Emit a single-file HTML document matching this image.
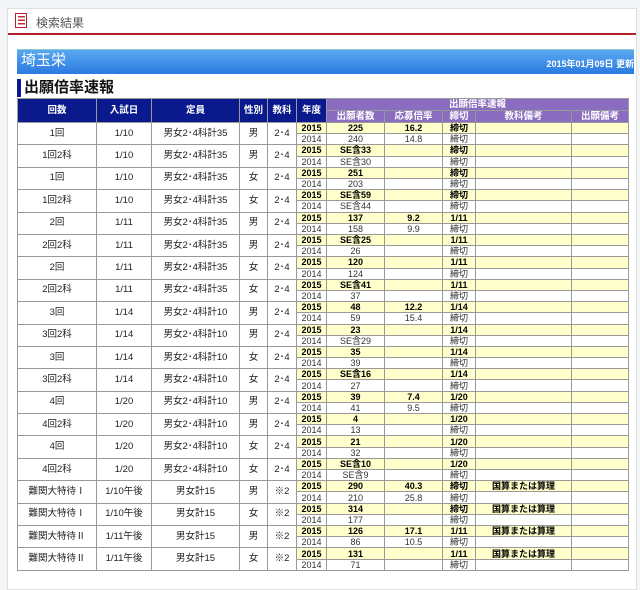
<!DOCTYPE html>
<html><head><meta charset="utf-8"><style>
body{margin:0;width:640px;height:578px;overflow:hidden;background:#f4f5f7;font-family:"Liberation Sans","Noto Sans CJK JP",sans-serif;}
.box{position:absolute;left:7px;top:8px;width:628px;height:580px;background:#fff;border:1px solid #e0e0e0;}
.hd{position:absolute;left:0;top:0;width:628px;height:24px;border-bottom:2px solid #b4222a;}
.hd .ic{position:absolute;left:7px;top:4px;width:12px;height:15px;border:1.5px solid #b4222a;box-sizing:border-box;background:repeating-linear-gradient(#fff 0 2px,#c0303a 2px 3.5px);background-clip:content-box;padding:1px 1.5px;}
.hd span{position:absolute;left:28px;top:5px;font-size:12px;color:#555;}
.bar{position:absolute;left:9px;top:40px;width:617px;height:24px;background:linear-gradient(#5aa8f0,#2a7ae0);border-top:1px solid #8cc;}
.bar b{position:absolute;left:4px;top:2px;font-size:15px;line-height:18px;color:#fff;font-weight:normal}
.bar i{position:absolute;right:0;top:7px;font-size:9px;color:#fff;font-weight:bold;font-style:normal}
.tt{position:absolute;left:9px;top:70px;height:18px;border-left:4px solid #0a1a8c;padding-left:3px;font-size:15px;font-weight:bold;line-height:18px;color:#111}
table{position:absolute;left:9px;top:89px;width:611px;border-collapse:collapse;table-layout:fixed;font-size:9px;}
td,th{border:1px solid #999;padding:0;text-align:center;overflow:hidden;white-space:nowrap;line-height:10px}
th{color:#fff;font-size:9.5px}
th.n{background:#0a1a8c;height:23px}
th.p{background:#8a6cc0;height:11px;line-height:10px}
td.l{height:21.4px;font-size:9.5px;color:#222}
tr.a td.r{background:#ffffcc;font-weight:bold;height:10.2px}
tr.b td{height:10.2px;color:#333}
</style></head><body>
<div class="box">
<div class="hd"><div class="ic"></div><span>検索結果</span></div>
<div class="bar"><b>埼玉栄</b><i>2015年01月09日 更新</i></div>
<div class="tt">出願倍率速報</div>
<table>
<colgroup><col style="width:79px"><col style="width:55px"><col style="width:88px"><col style="width:28px"><col style="width:29px"><col style="width:30px"><col style="width:58px"><col style="width:58px"><col style="width:33px"><col style="width:96px"><col style="width:57px"></colgroup>
<tr><th class="n" rowspan="2">回数</th><th class="n" rowspan="2">入試日</th><th class="n" rowspan="2">定員</th><th class="n" rowspan="2">性別</th><th class="n" rowspan="2">教科</th><th class="n" rowspan="2">年度</th><th class="p" colspan="5">出願倍率速報</th></tr>
<tr><th class="p">出願者数</th><th class="p">応募倍率</th><th class="p">締切</th><th class="p">教科備考</th><th class="p">出願備考</th></tr>

<tr class="a"><td class="l" rowspan="2">1回</td><td class="l" rowspan="2">1/10</td><td class="l" rowspan="2">男女2･4科計35</td><td class="l" rowspan="2">男</td><td class="l" rowspan="2">2･4</td><td class="r">2015</td><td class="r">225</td><td class="r">16.2</td><td class="r">締切</td><td class="r"></td><td class="r"></td></tr>
<tr class="b"><td>2014</td><td>240</td><td>14.8</td><td>締切</td><td></td><td></td></tr>
<tr class="a"><td class="l" rowspan="2">1回2科</td><td class="l" rowspan="2">1/10</td><td class="l" rowspan="2">男女2･4科計35</td><td class="l" rowspan="2">男</td><td class="l" rowspan="2">2･4</td><td class="r">2015</td><td class="r">SE含33</td><td class="r"></td><td class="r">締切</td><td class="r"></td><td class="r"></td></tr>
<tr class="b"><td>2014</td><td>SE含30</td><td></td><td>締切</td><td></td><td></td></tr>
<tr class="a"><td class="l" rowspan="2">1回</td><td class="l" rowspan="2">1/10</td><td class="l" rowspan="2">男女2･4科計35</td><td class="l" rowspan="2">女</td><td class="l" rowspan="2">2･4</td><td class="r">2015</td><td class="r">251</td><td class="r"></td><td class="r">締切</td><td class="r"></td><td class="r"></td></tr>
<tr class="b"><td>2014</td><td>203</td><td></td><td>締切</td><td></td><td></td></tr>
<tr class="a"><td class="l" rowspan="2">1回2科</td><td class="l" rowspan="2">1/10</td><td class="l" rowspan="2">男女2･4科計35</td><td class="l" rowspan="2">女</td><td class="l" rowspan="2">2･4</td><td class="r">2015</td><td class="r">SE含59</td><td class="r"></td><td class="r">締切</td><td class="r"></td><td class="r"></td></tr>
<tr class="b"><td>2014</td><td>SE含44</td><td></td><td>締切</td><td></td><td></td></tr>
<tr class="a"><td class="l" rowspan="2">2回</td><td class="l" rowspan="2">1/11</td><td class="l" rowspan="2">男女2･4科計35</td><td class="l" rowspan="2">男</td><td class="l" rowspan="2">2･4</td><td class="r">2015</td><td class="r">137</td><td class="r">9.2</td><td class="r">1/11</td><td class="r"></td><td class="r"></td></tr>
<tr class="b"><td>2014</td><td>158</td><td>9.9</td><td>締切</td><td></td><td></td></tr>
<tr class="a"><td class="l" rowspan="2">2回2科</td><td class="l" rowspan="2">1/11</td><td class="l" rowspan="2">男女2･4科計35</td><td class="l" rowspan="2">男</td><td class="l" rowspan="2">2･4</td><td class="r">2015</td><td class="r">SE含25</td><td class="r"></td><td class="r">1/11</td><td class="r"></td><td class="r"></td></tr>
<tr class="b"><td>2014</td><td>26</td><td></td><td>締切</td><td></td><td></td></tr>
<tr class="a"><td class="l" rowspan="2">2回</td><td class="l" rowspan="2">1/11</td><td class="l" rowspan="2">男女2･4科計35</td><td class="l" rowspan="2">女</td><td class="l" rowspan="2">2･4</td><td class="r">2015</td><td class="r">120</td><td class="r"></td><td class="r">1/11</td><td class="r"></td><td class="r"></td></tr>
<tr class="b"><td>2014</td><td>124</td><td></td><td>締切</td><td></td><td></td></tr>
<tr class="a"><td class="l" rowspan="2">2回2科</td><td class="l" rowspan="2">1/11</td><td class="l" rowspan="2">男女2･4科計35</td><td class="l" rowspan="2">女</td><td class="l" rowspan="2">2･4</td><td class="r">2015</td><td class="r">SE含41</td><td class="r"></td><td class="r">1/11</td><td class="r"></td><td class="r"></td></tr>
<tr class="b"><td>2014</td><td>37</td><td></td><td>締切</td><td></td><td></td></tr>
<tr class="a"><td class="l" rowspan="2">3回</td><td class="l" rowspan="2">1/14</td><td class="l" rowspan="2">男女2･4科計10</td><td class="l" rowspan="2">男</td><td class="l" rowspan="2">2･4</td><td class="r">2015</td><td class="r">48</td><td class="r">12.2</td><td class="r">1/14</td><td class="r"></td><td class="r"></td></tr>
<tr class="b"><td>2014</td><td>59</td><td>15.4</td><td>締切</td><td></td><td></td></tr>
<tr class="a"><td class="l" rowspan="2">3回2科</td><td class="l" rowspan="2">1/14</td><td class="l" rowspan="2">男女2･4科計10</td><td class="l" rowspan="2">男</td><td class="l" rowspan="2">2･4</td><td class="r">2015</td><td class="r">23</td><td class="r"></td><td class="r">1/14</td><td class="r"></td><td class="r"></td></tr>
<tr class="b"><td>2014</td><td>SE含29</td><td></td><td>締切</td><td></td><td></td></tr>
<tr class="a"><td class="l" rowspan="2">3回</td><td class="l" rowspan="2">1/14</td><td class="l" rowspan="2">男女2･4科計10</td><td class="l" rowspan="2">女</td><td class="l" rowspan="2">2･4</td><td class="r">2015</td><td class="r">35</td><td class="r"></td><td class="r">1/14</td><td class="r"></td><td class="r"></td></tr>
<tr class="b"><td>2014</td><td>39</td><td></td><td>締切</td><td></td><td></td></tr>
<tr class="a"><td class="l" rowspan="2">3回2科</td><td class="l" rowspan="2">1/14</td><td class="l" rowspan="2">男女2･4科計10</td><td class="l" rowspan="2">女</td><td class="l" rowspan="2">2･4</td><td class="r">2015</td><td class="r">SE含16</td><td class="r"></td><td class="r">1/14</td><td class="r"></td><td class="r"></td></tr>
<tr class="b"><td>2014</td><td>27</td><td></td><td>締切</td><td></td><td></td></tr>
<tr class="a"><td class="l" rowspan="2">4回</td><td class="l" rowspan="2">1/20</td><td class="l" rowspan="2">男女2･4科計10</td><td class="l" rowspan="2">男</td><td class="l" rowspan="2">2･4</td><td class="r">2015</td><td class="r">39</td><td class="r">7.4</td><td class="r">1/20</td><td class="r"></td><td class="r"></td></tr>
<tr class="b"><td>2014</td><td>41</td><td>9.5</td><td>締切</td><td></td><td></td></tr>
<tr class="a"><td class="l" rowspan="2">4回2科</td><td class="l" rowspan="2">1/20</td><td class="l" rowspan="2">男女2･4科計10</td><td class="l" rowspan="2">男</td><td class="l" rowspan="2">2･4</td><td class="r">2015</td><td class="r">4</td><td class="r"></td><td class="r">1/20</td><td class="r"></td><td class="r"></td></tr>
<tr class="b"><td>2014</td><td>13</td><td></td><td>締切</td><td></td><td></td></tr>
<tr class="a"><td class="l" rowspan="2">4回</td><td class="l" rowspan="2">1/20</td><td class="l" rowspan="2">男女2･4科計10</td><td class="l" rowspan="2">女</td><td class="l" rowspan="2">2･4</td><td class="r">2015</td><td class="r">21</td><td class="r"></td><td class="r">1/20</td><td class="r"></td><td class="r"></td></tr>
<tr class="b"><td>2014</td><td>32</td><td></td><td>締切</td><td></td><td></td></tr>
<tr class="a"><td class="l" rowspan="2">4回2科</td><td class="l" rowspan="2">1/20</td><td class="l" rowspan="2">男女2･4科計10</td><td class="l" rowspan="2">女</td><td class="l" rowspan="2">2･4</td><td class="r">2015</td><td class="r">SE含10</td><td class="r"></td><td class="r">1/20</td><td class="r"></td><td class="r"></td></tr>
<tr class="b"><td>2014</td><td>SE含9</td><td></td><td>締切</td><td></td><td></td></tr>
<tr class="a"><td class="l" rowspan="2">難関大特待Ⅰ</td><td class="l" rowspan="2">1/10午後</td><td class="l" rowspan="2">男女計15</td><td class="l" rowspan="2">男</td><td class="l" rowspan="2">※2</td><td class="r">2015</td><td class="r">290</td><td class="r">40.3</td><td class="r">締切</td><td class="r">国算または算理</td><td class="r"></td></tr>
<tr class="b"><td>2014</td><td>210</td><td>25.8</td><td>締切</td><td></td><td></td></tr>
<tr class="a"><td class="l" rowspan="2">難関大特待Ⅰ</td><td class="l" rowspan="2">1/10午後</td><td class="l" rowspan="2">男女計15</td><td class="l" rowspan="2">女</td><td class="l" rowspan="2">※2</td><td class="r">2015</td><td class="r">314</td><td class="r"></td><td class="r">締切</td><td class="r">国算または算理</td><td class="r"></td></tr>
<tr class="b"><td>2014</td><td>177</td><td></td><td>締切</td><td></td><td></td></tr>
<tr class="a"><td class="l" rowspan="2">難関大特待Ⅱ</td><td class="l" rowspan="2">1/11午後</td><td class="l" rowspan="2">男女計15</td><td class="l" rowspan="2">男</td><td class="l" rowspan="2">※2</td><td class="r">2015</td><td class="r">126</td><td class="r">17.1</td><td class="r">1/11</td><td class="r">国算または算理</td><td class="r"></td></tr>
<tr class="b"><td>2014</td><td>86</td><td>10.5</td><td>締切</td><td></td><td></td></tr>
<tr class="a"><td class="l" rowspan="2">難関大特待Ⅱ</td><td class="l" rowspan="2">1/11午後</td><td class="l" rowspan="2">男女計15</td><td class="l" rowspan="2">女</td><td class="l" rowspan="2">※2</td><td class="r">2015</td><td class="r">131</td><td class="r"></td><td class="r">1/11</td><td class="r">国算または算理</td><td class="r"></td></tr>
<tr class="b"><td>2014</td><td>71</td><td></td><td>締切</td><td></td><td></td></tr>
</table>
</div>
</body></html>
